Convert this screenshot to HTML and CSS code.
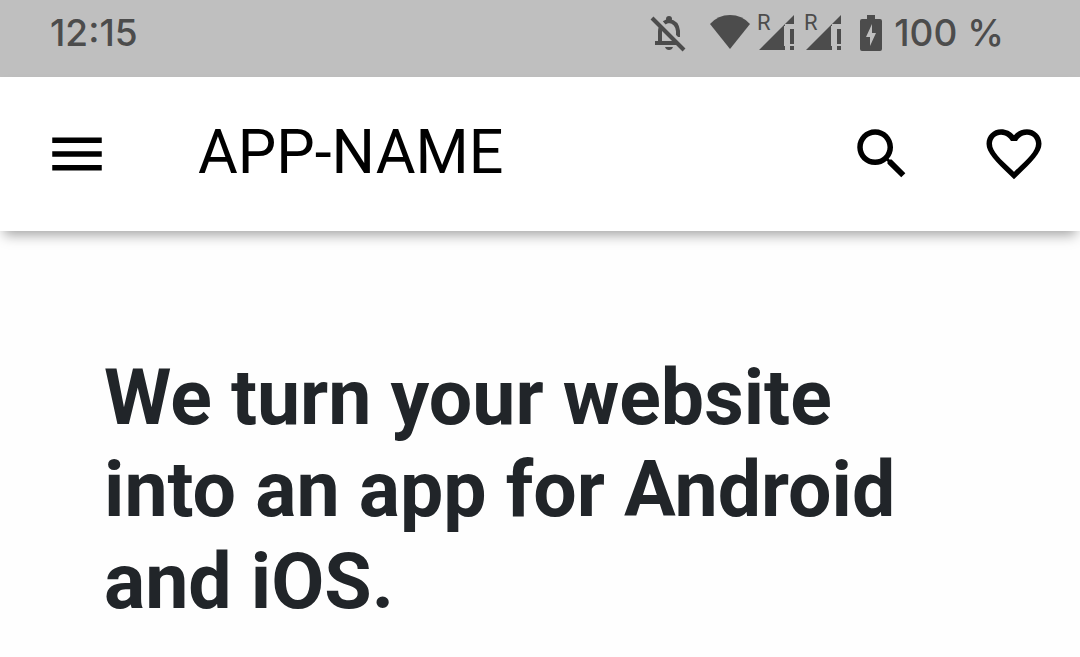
FILE: index.html
```html
<!DOCTYPE html>
<html lang="en">
  <head>
    <meta charset="UTF-8">
    <meta name="viewport" content="width=device-width, initial-scale=1.0">
    <title>APP-NAME</title>
    <link rel="stylesheet" href="styles.css">
  </head>
  <body>
    <div class="status-bar">
      <time class="clock">12:15</time>
      <div class="status-icons">
        <svg class="bell" viewBox="0 0 36 36" width="36" height="36" aria-hidden="true">
          <circle cx="18" cy="4" r="3"/>
          <path class="outline" d="M13 8Q16 6 18 6q8 1 9 10v6M10 12q-1 2-1 5v11M4 28h23"/>
          <path d="M14 32h8q-1 3-4 3t-4-3z"/>
          <path class="gap" d="M4 1l32 32"/>
          <path class="slash" d="M1 3l32 32"/>
        </svg>
        <svg class="wifi" viewBox="0 0 42 36" width="42" height="36" aria-hidden="true">
          <path d="M1 9Q9 0 21 0t20 9L21 34z"/>
        </svg>
        <svg class="signal" viewBox="0 0 38 40" width="38" height="40" aria-hidden="true">
          <text x="0" y="17">R</text>
          <path d="M2 37L37 2v9H28v2h-1v20h1v4zM33 16h4v15h-4zM33 33h4v4h-4z"/>
        </svg>
        <svg class="signal" viewBox="0 0 38 40" width="38" height="40" aria-hidden="true">
          <text x="0" y="17">R</text>
          <path d="M2 37L37 2v9H28v2h-1v20h1v4zM33 16h4v15h-4zM33 33h4v4h-4z"/>
        </svg>
        <svg class="battery" viewBox="0 0 22 36" width="22" height="36" aria-hidden="true">
          <path fill-rule="evenodd" d="M7 0h8v4h5q2 0 2 2v28q0 2-2 2H2q-2 0-2-2V6q0-2 2-2h5zM12 9L6 22h4v9l6-13h-4z"/>
        </svg>
        <span>100 %</span>
      </div>
    </div>

    <header class="app-bar">
      <button class="icon-button" aria-label="Menu">
        <svg viewBox="0 0 24 24" aria-hidden="true">
          <path d="M3 18h18v-2H3v2zm0-5h18v-2H3v2zm0-7v2h18V6H3z"/>
        </svg>
      </button>
      <h1 class="app-name">APP-NAME</h1>
      <div class="actions">
        <button class="icon-button" aria-label="Search">
          <svg viewBox="0 0 24 24" aria-hidden="true">
            <path d="M15.5 14h-.79l-.28-.27C15.41 12.59 16 11.11 16 9.5 16 5.91 13.09 3 9.5 3S3 5.91 3 9.5 5.91 16 9.5 16c1.61 0 3.09-.59 4.23-1.57l.27.28v.79l5 4.99L20.49 19l-4.99-5zm-6 0C7.01 14 5 11.99 5 9.5S7.01 5 9.5 5 14 7.01 14 9.5 11.99 14 9.5 14z"/>
          </svg>
        </button>
        <button class="icon-button" aria-label="Favorites">
          <svg viewBox="0 0 24 24" aria-hidden="true">
            <path fill-rule="evenodd" d="M12 21.2L10.6 19.8C5.4 14.8 2 11.6 2 8.3 2 5.3 4.4 3 7.3 3 9.2 3 10.9 3.8 12 5.2 13.1 3.8 14.8 3 16.7 3 19.6 3 22 5.3 22 8.3c0 3.3-3.4 6.5-8.6 11.5zM12 18.5l.2-.2C17 13.8 20 11.1 20 8.3 20 6.4 18.6 5 16.7 5c-1.5 0-2.9 1-3.6 2.3h-2.2C10.2 6 8.8 5 7.3 5 5.4 5 4 6.4 4 8.3c0 2.8 3 5.5 7.800 10z"/>
          </svg>
        </button>
      </div>
    </header>

    <main class="content">
      <h2>We turn your website into an app for Android and iOS.</h2>
    </main>
  </body>
</html>
```
FILE: styles.css
```css
*,
*::after,
*::before {
  box-sizing: border-box;
}

body {
  margin: 0;
  font-family: Roboto, sans-serif;
  color: #212529;
  background-color: #fefefe;
}

.status-bar {
  display: flex;
  align-items: center;
  justify-content: space-between;
  padding: 7px 76px 18px 50px;
  font-family: Inter, sans-serif;
  font-size: 37px;
  font-weight: 500;
  line-height: 52px;
  color: #4c4c4c;
  background-color: #bfbfbf;
}

.status-icons {
  display: flex;
  align-items: center;
}

.status-icons svg {
  overflow: visible;
  fill: currentcolor;
}

.bell {
  margin-right: 22px;
}

.bell .outline,
.bell .slash {
  fill: none;
  stroke: currentcolor;
  stroke-width: 4px;
}

.bell .gap {
  stroke: #bfbfbf;
  stroke-width: 3px;
}

.wifi {
  margin-right: 6px;
}

.signal {
  margin-right: 9px;
}

.signal text {
  font-family: Roboto, sans-serif;
  font-size: 22px;
  font-weight: 400;
}

.battery {
  margin: 0 12px 0 9px;
}

.app-bar {
  display: flex;
  align-items: center;
  padding: 44px 33px 44px 44px;
  color: #000;
  background-color: #fff;
  box-shadow: 0 8px 12px -4px rgb(0 0 0 / 36%);
}

.icon-button {
  display: flex;
  padding: 0;
  border: 0;
  color: inherit;
  background: none;
  cursor: pointer;
}

.icon-button svg {
  width: 66px;
  height: 66px;
  fill: currentcolor;
}

.app-name {
  margin: 0 auto 0 88px;
  padding-bottom: 4px;
  font-size: 61px;
  font-weight: 400;
  line-height: 60px;
}

.actions {
  display: flex;
  gap: 66px;
}

.content {
  padding: 121px 160px 32px 104px;
}

.content h2 {
  margin: 0;
  font-size: 77px;
  font-weight: 700;
  line-height: 92px;
}
```
